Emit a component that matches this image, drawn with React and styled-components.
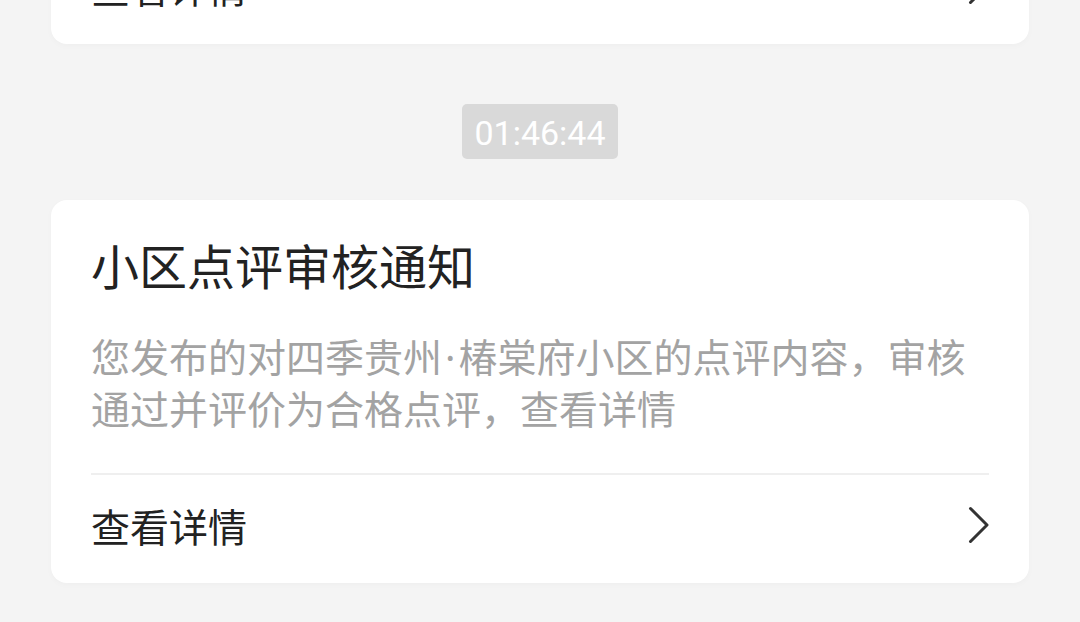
import React from 'react';
import styled, { createGlobalStyle } from 'styled-components';

const GlobalStyle = createGlobalStyle`
  html, body {
    margin: 0;
    padding: 0;
    background: #f4f4f4;
    overflow: hidden;
  }
  body {
    font-family: 'Noto Sans CJK SC', 'Noto Sans', sans-serif;
  }
`;

const Page = styled.div`
  width: 1080px;
  height: 622px;
  overflow: hidden;
  background: #f4f4f4;
`;

const Feed = styled.div`
  display: flex;
  flex-direction: column;
  align-items: center;
  padding: 0 51px;
  margin-top: ${({ $scroll }) => -$scroll}px;
`;

const Card = styled.div`
  align-self: stretch;
  display: flex;
  flex-direction: column;
  background: #ffffff;
  border-radius: 16px;
  padding: ${({ $top }) => $top}px 40px 8px;
  box-shadow: 0 2px 6px rgba(0, 0, 0, 0.025);
`;

const Title = styled.div`
  font-size: 48px;
  line-height: 66px;
  color: #222222;
`;

const Body = styled.div`
  margin-top: 34px;
  font-family: 'Noto Sans', 'Noto Sans CJK SC', sans-serif;
  font-size: 39px;
  line-height: 52px;
  color: #a3a3a3;
`;

const Dot = styled.span`
  margin: 0 3px;
`;

const Divider = styled.div`
  height: 2px;
  background: #efefef;
  margin-top: 38px;
`;

const Footer = styled.div`
  height: 100px;
  display: flex;
  align-items: center;
  justify-content: space-between;
  font-size: 39px;
  color: #222222;
`;

const Time = styled.div`
  margin: 60px 0 41px;
  padding: 3px 12px 0;
  line-height: 52px;
  font-family: Roboto, 'Noto Sans', sans-serif;
  font-size: 34px;
  color: #ffffff;
  background: #d9d9d9;
  border-radius: 5px;
`;

const Chevron = () => (
  <svg width="21" height="38" viewBox="0 0 21 38" fill="none">
    <path
      d="M2.5 2.5 L19 19 L2.5 35.5"
      stroke="#333333"
      strokeWidth="3"
      strokeLinecap="round"
      strokeLinejoin="round"
    />
  </svg>
);

const DetailRow = () => (
  <Footer>
    <span>查看详情</span>
    <Chevron />
  </Footer>
);

export default function App() {
  return (
    <Page>
      <GlobalStyle />
      <Feed $scroll={64}>
        <Card $top={0}>
          <DetailRow />
        </Card>
        <Time>01:46:44</Time>
        <Card $top={31}>
          <Title>小区点评审核通知</Title>
          <Body>
            您发布的对四季贵州<Dot>·</Dot>椿棠府小区的点评内容，审核通过并评价为合格点评，查看详情
          </Body>
          <Divider />
          <DetailRow />
        </Card>
      </Feed>
    </Page>
  );
}
